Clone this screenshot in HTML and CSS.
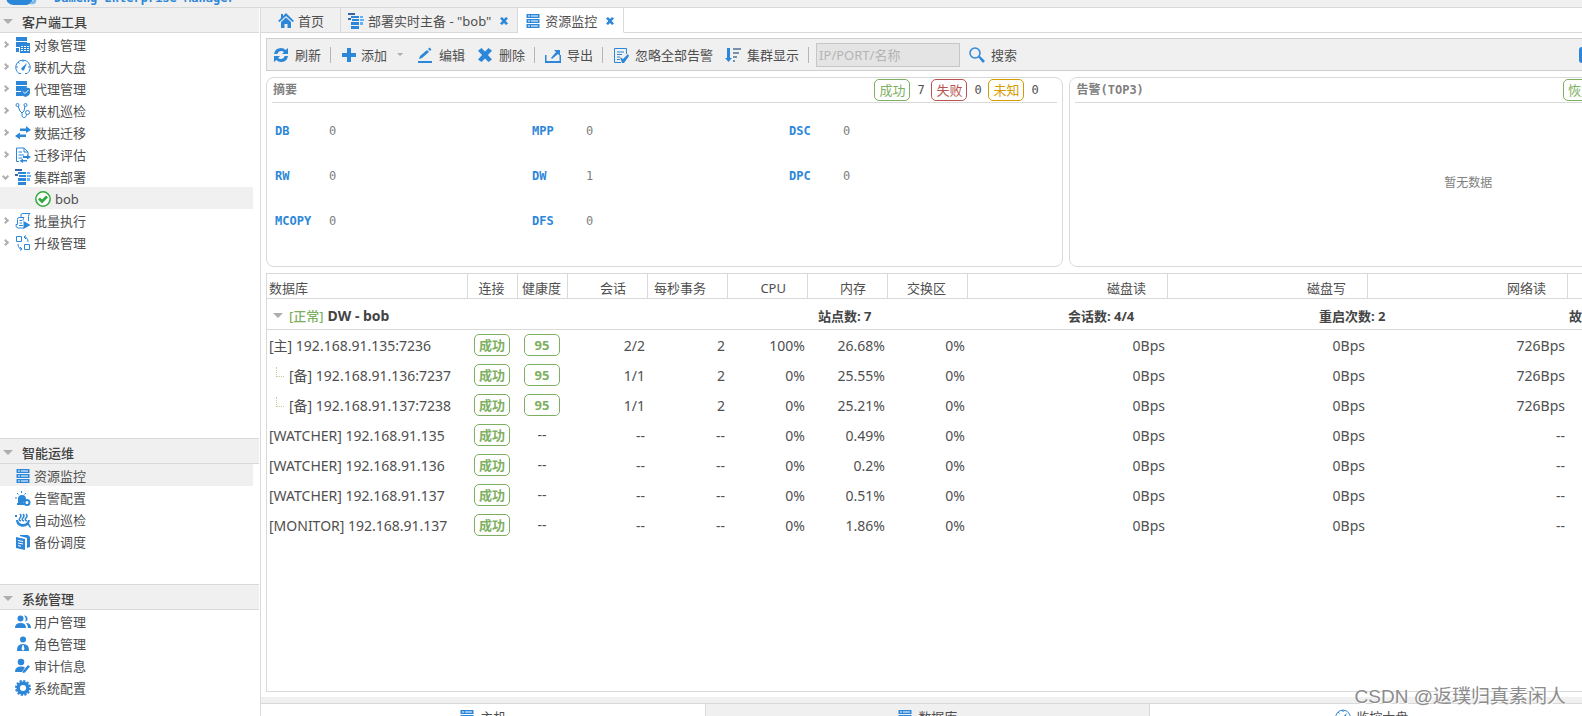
FILE: index.html
```
<!DOCTYPE html>
<html lang="zh-CN">
<head>
<meta charset="utf-8">
<title>Dameng Enterprise Manager</title>
<link rel="stylesheet" href="styles.css">
</head>
<body>
<svg class="sprite" aria-hidden="true">
  <symbol id="i-object" viewBox="0 0 16 16"><path d="M1 0h11v4H1zM1 5h11v1H5v4H1zM1 11h3v4H1z"/><path d="M5 6h10v10H5z"/><path d="M6 9h2v1H6zm3 0h2v1H9zm3 0h2v1h-2zM6 11h2v1H6zm3 0h2v1H9zm3 0h2v1h-2zM6 13h2v1H6zm3 0h2v1H9zm3 0h2v1h-2z" fill="#fff"/></symbol>
  <symbol id="i-gauge" viewBox="0 0 16 16"><path class="ln" d="M4 14.500A7.300 7.300 0 1 1 12 14.500M8 1v2M1 8h2M13 8h2M3 3l1.500 1.500M4 14.500h2M10 14.500h2"/><path d="M12 4L9.500 10a1.600 1.600 0 1 1-2.500-1.500z"/></symbol>
  <symbol id="i-agent" viewBox="0 0 16 16"><path d="M1 0h11v4H1zM1 5h11v1l-6 2v2H1zM1 11h5l2 4H1z"/><path d="M10.500 6L15 7.500v4c0 2-2 3.500-4.500 4.500C8 15 6 13.500 6 11.500v-4z"/><path d="M8 10.500l2 2 3.500-3.500" fill="none" stroke="#fff"/></symbol>
  <symbol id="i-steth" viewBox="0 0 16 16"><path class="ln" d="M3 3L5 8l2 2 2-2 1-5M7 10v3q1 2.500 3 1.500 1.500-1 1.500-3.500"/><circle class="ln" cx="2.500" cy="2" r="1.500"/><circle class="ln" cx="10.500" cy="2" r="1.500"/><circle class="ln" cx="12.500" cy="9.500" r="2"/></symbol>
  <symbol id="i-swap" viewBox="0 0 16 16"><path d="M5 3.500h6V1l5 4-5 3V6H5zM11 9.500H5V7.500L0 11l5 3.500V12h6z"/></symbol>
  <symbol id="i-assess" viewBox="0 0 16 16"><path class="ln" d="M4 14.500H1.500V1H9l4 4v3M9 1v4h4M3.500 5H7M3.500 8H9M3.500 11H7"/><path d="M8 9h4V7.500l4 2.500-4 2.500V11H8zM12 13H8v-1.500L4.500 14 8 16v-1.500h4z"/></symbol>
  <symbol id="i-cluster" viewBox="0 0 16 16"><path d="M0 0h7v2H0zM0 5h3v2H0z" fill="#3566a3"/><path d="M3 3h8v2H3zM4 6h7v2H4zM3 9h8v3H3zM3 13h8v3H3z"/><path d="M12 3h3v2h-3zM12 6h4v2h-4zM12 9h3v3h-3z" fill="#60b4ff"/></symbol>
  <symbol id="i-ok" viewBox="0 0 16 16"><circle cx="8" cy="8" r="7.200" fill="#fff" stroke="#2faa3c" stroke-width="1.500"/><path d="M4 7.500l3 3 5-5" fill="none" stroke="#2faa3c" stroke-width="2.800"/></symbol>
  <symbol id="i-batch" viewBox="0 0 16 16"><path class="ln" d="M6 4V2q0-1.500 2-1.500h7q-1.500 1-1.500 3V8M9 4.500H4q-1.500 0-1.500 2v5H1q-.5 3 2 3.500h6M9 4.500q-1 1-1 3M4.500 7.500H7M4.500 10H7M4 12.500h4"/><path d="M8.500 8l7 4-7 4z"/></symbol>
  <symbol id="i-upgrade" viewBox="0 0 16 16"><path class="ln" d="M1.500 1.500h5v5h-5zM9.500 9.500h5v5h-5zM9 2q4 0 4 5M7 14q-4 0-4-5M11 .5L9 2l2 2M5 12l2 2-2 1.500"/></symbol>
  <symbol id="i-server" viewBox="0 0 16 16"><path d="M1.500 1h13v4h-13zM1.500 6h13v4h-13zM1.500 11h13v4h-13z"/><path d="M3 2.500h2v1H3zm3 0h7v1H6zM3 7.500h2v1H3zm3 0h7v1H6zM3 12.500h2v1H3zm3 0h7v1H6z" fill="#fff"/></symbol>
  <symbol id="i-alarm" viewBox="0 0 16 16"><path d="M3 12V9a4 4 0 0 1 8 0v1l-3 3H3zM2 13h7v2H2z"/><path class="ln" d="M6.500 1v2M2 3l1.500 1.500M11 3L9.500 4.500M0 8h2M5 9v3"/><circle cx="12" cy="12.500" r="2.500" fill="#fff" stroke="#2d87d9" stroke-width="2"/></symbol>
  <symbol id="i-inspect" viewBox="0 0 16 16"><path class="ln" stroke-width="1.500" d="M5 2q2 2 0 4t1 3M8 2q2 2 0 4t1 3M11 2q2 2 0 4t1 3"/><path d="M1 8q0 5 5 6.500 4 1 7-1.500l2 3 1-1-2-3.500 1-3.500h-2q-1 4-5 4T3 8zM0 3h2v2H0z"/></symbol>
  <symbol id="i-backup" viewBox="0 0 16 16"><path d="M5 1h8l2 2v10l-3 1V4L5 2z"/><path d="M1 3l9 2v11l-9-2z"/><path d="M3 6.500l5 1M3 9l5 1M3 11.500l3 .8" stroke="#fff" fill="none"/></symbol>
  <symbol id="i-users" viewBox="0 0 16 16"><circle cx="5.500" cy="4.500" r="3"/><path d="M0 14q0-5 5.500-5T11 14z"/><path d="M9 1.500a3 3 0 0 1 1 6q2-3-1-6zM11 9q5 0 5 5h-3q0-3-2-5z"/></symbol>
  <symbol id="i-role" viewBox="0 0 16 16"><circle cx="8" cy="3.500" r="3"/><path d="M2 15q-.5-7 6-7t6 7z"/><path d="M7.500 9h1l1 4-1.500 2-1.500-2z" fill="#fff"/></symbol>
  <symbol id="i-audit" viewBox="0 0 16 16"><circle cx="6" cy="4" r="3.300"/><path d="M0 14q0-5.500 6-5.500 3 0 4 1L7 14z"/><path d="M8 13l5-6 2 1.500-5 6-2.500.5z"/></symbol>
  <symbol id="i-gear" viewBox="0 0 16 16"><circle cx="8" cy="8" r="4.800" fill="none" stroke="#2d87d9" stroke-width="3.500"/><circle cx="8" cy="8" r="7" fill="none" stroke="#2d87d9" stroke-width="2" stroke-dasharray="2.200 1.465"/></symbol>
  <symbol id="i-home" viewBox="0 0 16 16"><path d="M8 0l8 8-1.500 1L8 3 1.500 9 0 8l3-3V1h2v2z"/><path d="M3 9l5-4.500L13 9v6H9.500v-4h-3v4H3z"/></symbol>
  <symbol id="i-close" viewBox="0 0 8 8"><path d="M0 1.500L2 0l2 2 2-2 2 1.500L5.700 4 8 6.500 6 8 4 6 2 8 0 6.500 2.300 4z"/></symbol>
  <symbol id="i-refresh" viewBox="0 0 16 16"><path d="M1 7q1-6 7-6 3 0 4.500 2L15 1v6H9l2-2Q8 3 5.500 5 4.500 6 4.500 7zM15 9q-1 6-7 6-3 0-4.500-2L1 15V9h6l-2 2q3 2 5.500 0 1-1 1-2z"/></symbol>
  <symbol id="i-plus" viewBox="0 0 16 16"><path d="M6 1h4v5h5v4h-5v5H6v-5H1V6h5z"/></symbol>
  <symbol id="i-edit" viewBox="0 0 16 16"><path d="M1 14h14v2H1zM2 12l1-3 7-6 2 2-7 6zM11 2l1.500-1.500 2 2L13 4z"/></symbol>
  <symbol id="i-export" viewBox="0 0 16 16"><path d="M0 8h1.500v6h13V8H16v8H0zM9 3h6v6l-2-2-6 5-1-1 5-6z"/></symbol>
  <symbol id="i-note" viewBox="0 0 16 16"><path class="ln" d="M13.500 7V1.500h-12v14H8M4 5h7M4 7.500h5M4 10h3M4 12.500h3"/><path d="M7 10l3 2 5-5 1 2-5 7H9z"/></symbol>
  <symbol id="i-sort" viewBox="0 0 16 16"><path d="M2 1h3v10h2l-3.500 4L0 11h2z"/><path d="M8 1h8v2H8zM8 5h6v2H8zM8 9h4v2H8zM8 13h2v2H8z" fill="#7790ad"/></symbol>
  <symbol id="i-search" viewBox="0 0 16 16"><circle cx="6" cy="6" r="5" fill="none" stroke="#2d87d9" stroke-width="1.500"/><path d="M9 10l2-1 5 5-2 2z"/></symbol>
  <symbol id="i-cloud" viewBox="0 0 32 20"><path d="M8 20Q0 19 1 12 2 6 8 7q4-7 11-4 4 2 4 7 4 1 4 4 0 5-6 6z"/><path d="M25 17q4-1 4-5 3 3 1 6-2 2-5 1z" fill="#79b8ee"/></symbol>
</svg>

<div class="app">
  <header class="banner">
    <svg class="banner-logo"><use href="#i-cloud"/></svg>
    <span class="banner-title">Dameng Enterprise Manager</span>
  </header>

  <div class="body">
    <nav class="sidebar">
      <section class="group group-main">
        <h2 class="group-head"><i class="tri"></i>客户端工具</h2>
        <ul class="tree">
          <li class="node"><i class="chev"></i><svg class="icon"><use href="#i-object"/></svg>对象管理</li>
          <li class="node"><i class="chev"></i><svg class="icon"><use href="#i-gauge"/></svg>联机大盘</li>
          <li class="node"><i class="chev"></i><svg class="icon"><use href="#i-agent"/></svg>代理管理</li>
          <li class="node"><i class="chev"></i><svg class="icon"><use href="#i-steth"/></svg>联机巡检</li>
          <li class="node"><i class="chev"></i><svg class="icon"><use href="#i-swap"/></svg>数据迁移</li>
          <li class="node"><i class="chev"></i><svg class="icon"><use href="#i-assess"/></svg>迁移评估</li>
          <li class="node"><i class="chev chev-open"></i><svg class="icon"><use href="#i-cluster"/></svg>集群部署</li>
          <li class="node node-child selected"><svg class="icon"><use href="#i-ok"/></svg>bob</li>
          <li class="node"><i class="chev"></i><svg class="icon"><use href="#i-batch"/></svg>批量执行</li>
          <li class="node"><i class="chev"></i><svg class="icon"><use href="#i-upgrade"/></svg>升级管理</li>
        </ul>
      </section>
      <section class="group">
        <h2 class="group-head"><i class="tri"></i>智能运维</h2>
        <ul class="tree">
          <li class="node selected"><i class="chev-gap"></i><svg class="icon"><use href="#i-server"/></svg>资源监控</li>
          <li class="node"><i class="chev-gap"></i><svg class="icon"><use href="#i-alarm"/></svg>告警配置</li>
          <li class="node"><i class="chev-gap"></i><svg class="icon"><use href="#i-inspect"/></svg>自动巡检</li>
          <li class="node"><i class="chev-gap"></i><svg class="icon"><use href="#i-backup"/></svg>备份调度</li>
        </ul>
      </section>
      <section class="group">
        <h2 class="group-head"><i class="tri"></i>系统管理</h2>
        <ul class="tree">
          <li class="node"><i class="chev-gap"></i><svg class="icon"><use href="#i-users"/></svg>用户管理</li>
          <li class="node"><i class="chev-gap"></i><svg class="icon"><use href="#i-role"/></svg>角色管理</li>
          <li class="node"><i class="chev-gap"></i><svg class="icon"><use href="#i-audit"/></svg>审计信息</li>
          <li class="node"><i class="chev-gap"></i><svg class="icon"><use href="#i-gear"/></svg>系统配置</li>
        </ul>
      </section>
    </nav>

    <main class="main">
      <div class="tabs">
        <button class="tab tab-home"><svg class="icon"><use href="#i-home"/></svg>首页</button>
        <button class="tab"><svg class="icon"><use href="#i-cluster"/></svg>部署实时主备 - "bob"<svg class="close"><use href="#i-close"/></svg></button>
        <button class="tab active"><svg class="icon"><use href="#i-server"/></svg>资源监控<svg class="close"><use href="#i-close"/></svg></button>
      </div>

      <div class="content">
        <div class="toolbar">
          <button class="tool"><svg class="icon"><use href="#i-refresh"/></svg>刷新</button>
          <i class="sep"></i>
          <button class="tool tool-menu"><svg class="icon"><use href="#i-plus"/></svg>添加<i class="tri tri-small"></i></button>
          <button class="tool"><svg class="icon"><use href="#i-edit"/></svg>编辑</button>
          <button class="tool"><svg class="icon icon-x"><use href="#i-close"/></svg>删除</button>
          <i class="sep"></i>
          <button class="tool"><svg class="icon"><use href="#i-export"/></svg>导出</button>
          <i class="sep"></i>
          <button class="tool"><svg class="icon"><use href="#i-note"/></svg>忽略全部告警</button>
          <button class="tool"><svg class="icon"><use href="#i-sort"/></svg>集群显示</button>
          <i class="sep"></i>
          <input class="search" type="text" placeholder="IP/PORT/名称" aria-label="IP/PORT/名称">
          <button class="tool"><svg class="icon"><use href="#i-search"/></svg>搜索</button>
          <i class="edge"></i>
        </div>

        <div class="panels">
          <section class="panel">
            <header class="panel-head">
              <h3 class="panel-title">摘要</h3>
              <div class="counts">
                <span class="tag green">成功</span><span class="count">7</span>
                <span class="tag red">失败</span><span class="count">0</span>
                <span class="tag amber">未知</span><span class="count">0</span>
              </div>
            </header>
            <dl class="stats">
              <div class="stat"><dt>DB</dt><dd>0</dd></div>
              <div class="stat"><dt>MPP</dt><dd>0</dd></div>
              <div class="stat"><dt>DSC</dt><dd>0</dd></div>
              <div class="stat"><dt>RW</dt><dd>0</dd></div>
              <div class="stat"><dt>DW</dt><dd>1</dd></div>
              <div class="stat"><dt>DPC</dt><dd>0</dd></div>
              <div class="stat"><dt>MCOPY</dt><dd>0</dd></div>
              <div class="stat"><dt>DFS</dt><dd>0</dd></div>
            </dl>
          </section>
          <section class="panel">
            <header class="panel-head">
              <h3 class="panel-title">告警(TOP3)</h3>
              <div class="counts counts-alarm"><span class="tag green">恢复</span></div>
            </header>
            <p class="empty">暂无数据</p>
          </section>
        </div>

        <div class="grid">
          <table class="table">
            <colgroup>
              <col class="c-name"><col class="c-tag"><col class="c-tag"><col class="c-num"><col class="c-num"><col class="c-num"><col class="c-num"><col class="c-num"><col class="c-io"><col class="c-io"><col class="c-io"><col class="c-io">
            </colgroup>
            <thead>
              <tr><th class="name">数据库</th><th class="mid">连接</th><th class="mid">健康度</th><th>会话</th><th>每秒事务</th><th>CPU</th><th>内存</th><th>交换区</th><th>磁盘读</th><th>磁盘写</th><th>网络读</th><th></th></tr>
            </thead>
            <tbody>
              <tr class="cluster">
                <td colspan="12"><div class="cluster-row"><div class="cluster-name"><i class="tri"></i><span class="state">[正常]</span><b class="cluster-title">DW - bob</b></div><b>站点数: 7</b><b>会话数: 4/4</b><b>重启次数: 2</b><b>故障次数</b></div></td>
              </tr>
              <tr><td class="name">[主] 192.168.91.135:7236</td><td class="mid"><span class="tag green strong">成功</span></td><td class="mid"><span class="tag green strong">95</span></td><td>2/2</td><td>2</td><td>100%</td><td>26.68%</td><td>0%</td><td>0Bps</td><td>0Bps</td><td>726Bps</td><td></td></tr>
              <tr><td class="name"><i class="branch"></i>[备] 192.168.91.136:7237</td><td class="mid"><span class="tag green strong">成功</span></td><td class="mid"><span class="tag green strong">95</span></td><td>1/1</td><td>2</td><td>0%</td><td>25.55%</td><td>0%</td><td>0Bps</td><td>0Bps</td><td>726Bps</td><td></td></tr>
              <tr><td class="name"><i class="branch"></i>[备] 192.168.91.137:7238</td><td class="mid"><span class="tag green strong">成功</span></td><td class="mid"><span class="tag green strong">95</span></td><td>1/1</td><td>2</td><td>0%</td><td>25.21%</td><td>0%</td><td>0Bps</td><td>0Bps</td><td>726Bps</td><td></td></tr>
              <tr><td class="name">[WATCHER] 192.168.91.135</td><td class="mid"><span class="tag green strong">成功</span></td><td class="mid">--</td><td>--</td><td>--</td><td>0%</td><td>0.49%</td><td>0%</td><td>0Bps</td><td>0Bps</td><td>--</td><td></td></tr>
              <tr><td class="name">[WATCHER] 192.168.91.136</td><td class="mid"><span class="tag green strong">成功</span></td><td class="mid">--</td><td>--</td><td>--</td><td>0%</td><td>0.2%</td><td>0%</td><td>0Bps</td><td>0Bps</td><td>--</td><td></td></tr>
              <tr><td class="name">[WATCHER] 192.168.91.137</td><td class="mid"><span class="tag green strong">成功</span></td><td class="mid">--</td><td>--</td><td>--</td><td>0%</td><td>0.51%</td><td>0%</td><td>0Bps</td><td>0Bps</td><td>--</td><td></td></tr>
              <tr><td class="name">[MONITOR] 192.168.91.137</td><td class="mid"><span class="tag green strong">成功</span></td><td class="mid">--</td><td>--</td><td>--</td><td>0%</td><td>1.86%</td><td>0%</td><td>0Bps</td><td>0Bps</td><td>--</td><td></td></tr>
            </tbody>
          </table>
        </div>
      </div>

      <div class="bottom-tabs">
        <button class="btab active"><svg class="icon"><use href="#i-server"/></svg>主机</button>
        <button class="btab"><svg class="icon"><use href="#i-server"/></svg>数据库</button>
        <button class="btab active"><svg class="icon"><use href="#i-gauge"/></svg>监控大盘</button>
      </div>
    </main>
  </div>
</div>
<div class="watermark">CSDN @返璞归真素闲人</div>
</body>
</html>
```
FILE: styles.css
```
:root {
  --blue: #2d87d9;
  --line: #d9d9d9;
  --bar: #f0f0f0;
  --text: #4f4f4f;
  --green: #7eb062;
  --mono: "DejaVu Sans Mono", "Noto Sans CJK SC", monospace;
}

*, *::before { box-sizing: border-box; }

body {
  margin: 0;
  height: 100vh;
  overflow: hidden;
  background: #fff;
  color: var(--text);
  font: 13px/20px "Noto Sans", "Noto Sans CJK SC", sans-serif;
}

h2, h3, p, ul, dl, dd { margin: 0; padding: 0; }
ul { list-style: none; }
button { font: inherit; color: inherit; background: none; border: 0; padding: 0; white-space: nowrap; }

.sprite { position: absolute; width: 0; height: 0; }
.icon { flex: none; width: 16px; height: 16px; fill: var(--blue); }
.ln { fill: none; stroke: var(--blue); }

/* The last 14px of the page sit below the fold. */
.app { display: flex; flex-direction: column; height: calc(100vh + 14px); }

.banner {
  flex: none;
  display: flex;
  align-items: flex-end;
  gap: 16px;
  height: 8px;
  padding: 0 0 2px 5px;
  overflow: hidden;
  background: var(--bar);
  border-bottom: 1px solid var(--line);
}
.banner-logo { flex: none; width: 33px; height: 20px; fill: var(--blue); }
.banner-title { color: var(--blue); font: bold 12px/14px var(--mono); }

.body { flex: 1; display: flex; min-height: 0; }

/* Sidebar */
.sidebar { flex: none; display: flex; flex-direction: column; width: 261px; border-right: 1px solid var(--line); padding-right: 1px; }
.group { flex: 0 0 146px; border-top: 1px solid var(--line); }
.group-main { flex: 1; border-top: 0; }
.group-head {
  display: flex;
  align-items: center;
  gap: 9px;
  height: 25px;
  padding: 3px 0 0 3px;
  background: var(--bar);
  border-bottom: 1px solid var(--line);
  font-size: 13px;
  font-weight: 500;
  color: #404040;
}
.tri { flex: none; width: 10px; height: 5px; background: #aeaeae; clip-path: polygon(0 0, 100% 0, 50% 100%); }
.tri-small { width: 6px; height: 3px; }
.node { display: flex; align-items: center; gap: 3px; height: 22px; margin-right: 6px; padding: 2px 0 0 3px; }
.node-child { gap: 4px; padding-left: 35px; }
.selected { background: var(--bar); }
.chev, .chev-gap { flex: none; width: 9px; height: 7px; }
.chev::before {
  content: "";
  display: block;
  width: 5px;
  height: 5px;
  border: solid #aeaeae;
  border-width: 2px 2px 0 0;
  transform: rotate(45deg);
}
.chev-open::before { transform: rotate(135deg); }

/* Document tabs */
.main { flex: 1; min-width: 0; display: flex; flex-direction: column; overflow: hidden; }
.tabs { flex: none; display: flex; height: 25px; border-bottom: 1px solid var(--line); }
.tab {
  display: flex;
  align-items: center;
  gap: 4px;
  height: 25px;
  padding: 2px 9px 0 7px;
  background: var(--bar);
  border: solid var(--line);
  border-width: 0 1px 1px 0;
}
.tab-home { padding: 2px 16px 0 17px; }
.tab.active { background: #fff; border-bottom-color: #fff; }
.close { flex: none; width: 8px; height: 8px; margin-left: 5px; fill: var(--blue); }

.content { flex: 1; min-height: 0; display: flex; flex-direction: column; gap: 6px; padding: 5px 0 5px 5px; }

/* Toolbar */
.toolbar {
  flex: none;
  display: flex;
  align-items: center;
  height: 33px;
  padding-left: 6px;
  background: var(--bar);
  border: 1px solid #cfcfcf;
  border-right: 0;
}
.tool { display: flex; align-items: center; gap: 6px; margin-right: 12px; }
.tool:has(+ .sep) { margin-right: 9px; }
.tool-menu { gap: 4px; margin-right: 14px; }
.tool-menu .tri { margin-left: 6px; }
.icon-x { width: 14px; height: 14px; margin: 0 1px; }
.sep { flex: none; width: 1px; height: 16px; margin-right: 10px; background: #b5b5b5; }
.sep:has(+ .search) { margin-right: 7px; }
.search {
  width: 144px;
  height: 24px;
  margin-right: 9px;
  padding: 0 2px;
  background: #e4e4e4;
  border: 1px solid #c6c6c6;
  font: inherit;
}
.search::placeholder { color: #b4b4b4; }
.edge { width: 3px; height: 16px; margin-left: auto; background: var(--blue); border-radius: 3px 0 0 3px; }

/* Summary and alarm panels */
.panels { flex: none; display: flex; gap: 6px; }
.panel { flex: 0 0 60.6%; height: 190px; padding: 0 5px; border: 1px solid var(--line); border-radius: 8px; }
.panel-head { display: flex; align-items: center; justify-content: space-between; height: 25px; padding-left: 1px; border-bottom: 1px solid var(--line); }
.panel-title { color: #808080; font: bold 12px/20px var(--mono); }
.counts { display: flex; align-items: center; padding-right: 19px; }
.counts-alarm { padding-right: 262px; }
.count { width: 21px; padding-left: 7px; font: 12px/20px var(--mono); }
.counts .count:last-child { width: 14px; }
.tag {
  display: inline-block;
  width: 36px;
  height: 22px;
  border: 1px solid;
  border-radius: 5px;
  font-size: 13px;
  line-height: 20px;
  text-align: center;
  vertical-align: middle;
}
.strong { font-weight: bold; }
.green { color: var(--green); }
.red { color: #b85450; }
.amber { color: #d79b00; }
.stats { display: grid; grid-template-columns: repeat(3, 257px); grid-auto-rows: 45px; padding: 6px 3px; font: 12px/45px var(--mono); }
.stat { display: flex; }
.stat dt { width: 54px; color: var(--blue); font-weight: bold; }
.stat dd { color: #808080; }
.empty { padding-top: 70px; text-align: center; color: #808080; font: 12px/20px var(--mono); }

/* Database table */
.grid { flex: 1; min-height: 0; overflow: hidden; border: 1px solid var(--line); border-right: 0; }
.table { width: 1501px; table-layout: fixed; border-collapse: separate; border-spacing: 0; }
.c-name { width: 201px; }
.c-tag { width: 50px; }
.c-num { width: 80px; }
.c-io { width: 200px; }
.table th {
  height: 25px;
  padding: 3px 21px 0 0;
  border: solid var(--line);
  border-width: 0 1px 1px 0;
  font-weight: normal;
  text-align: right;
  white-space: nowrap;
}
.table td { height: 30px; padding: 2px 3px 0 0; font-size: 14px; text-align: right; white-space: nowrap; }
.table .name { padding-left: 2px; padding-right: 0; text-align: left; }
.table .mid { padding-left: 0; padding-right: 2px; text-align: center; }
.table td.mid { padding-top: 0; }
.table .cluster td { height: 31px; padding: 3px 0 0; border-bottom: 1px solid var(--line); font-size: 13px; text-align: left; }
.cluster-row { display: grid; grid-template-columns: 551px 250px 251px 250px 1fr; color: #444; }
.cluster-name { display: flex; align-items: center; gap: 4px; padding-left: 6px; }
.cluster-title { font-size: 14px; }
.state { padding-left: 2px; color: var(--green); font-weight: 500; }
.branch { display: inline-block; width: 8px; height: 10px; margin: 0 5px 0 7px; border: dotted #c5cf9f; border-width: 0 0 1px 1px; vertical-align: 4px; }

/* Lower tabs */
.bottom-tabs { flex: none; display: flex; height: 33px; border-top: 6px solid var(--bar); }
.btab {
  flex: 0 0 33.65%;
  display: flex;
  align-items: center;
  justify-content: center;
  gap: 5px;
  background: var(--bar);
  border: solid var(--line);
  border-width: 1px 1px 0 0;
}
.btab.active { background: #fff; }

.watermark {
  position: absolute;
  right: 16px;
  bottom: 6px;
  color: #8c8c8c;
  font: 19px/26px "Liberation Sans", "Noto Sans CJK SC", sans-serif;
  text-shadow: 1px 1px 0 #fff;
}
```
